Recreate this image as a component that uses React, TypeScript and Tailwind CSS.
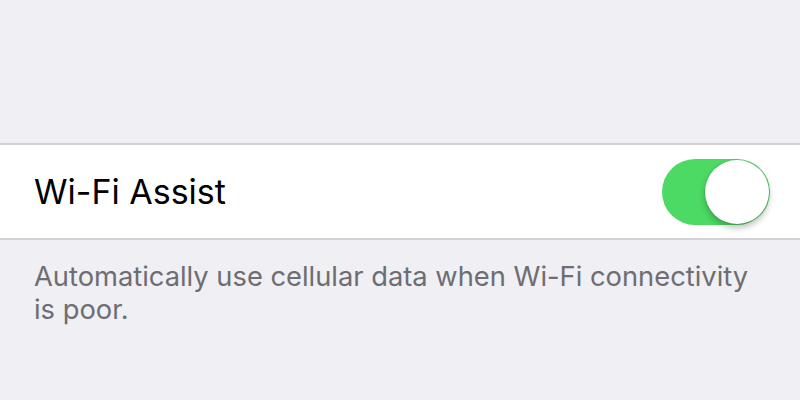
export default function App() {
  return (
    <div
      className="flex h-[400px] w-[800px] flex-col bg-[#efeff4]"
      style={{ fontFamily: 'Inter, "Noto Sans", sans-serif' }}
    >
      <div className="h-[143px] shrink-0" />
      {/* setting row */}
      <div className="flex h-[97px] shrink-0 items-center justify-between border-y-2 border-[#d1d1d6] bg-white pl-[34px] pr-[30px]">
        <span className="text-[34px] leading-none text-black">Wi-Fi Assist</span>
        <div className="relative h-[66px] w-[108px] rounded-full bg-[#4cd964]">
          <div className="absolute right-[1px] top-[1px] h-[64px] w-[64px] rounded-full bg-white shadow-[0_4px_6px_rgba(0,0,0,0.25),0_0_0_1px_rgba(0,0,0,0.06)]" />
        </div>
      </div>
      <p className="w-[760px] pl-[34px] pt-[20px] text-[27.3px] leading-[33px] text-[#6d6d72]">
        Automatically use cellular data when Wi-Fi connectivity is poor.
      </p>
    </div>
  )
}
